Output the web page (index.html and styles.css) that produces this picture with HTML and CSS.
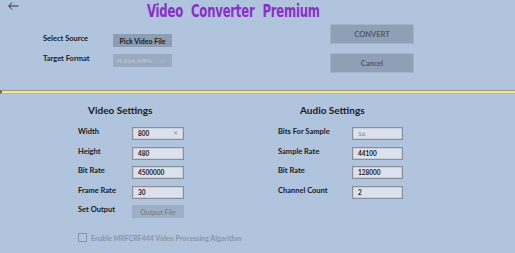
FILE: index.html
```html
<!DOCTYPE html>
<html>
<head>
    <title>Video Converter Premium</title>
    <link rel="stylesheet" href="styles.css">
</head>
<body>
    <div class="page">
        <div class="top">
            <div class="left">
                <div class="titlebar">
                    <span class="back">
                        <svg width="11" height="8" viewBox="0 0 11 8"><path d="M4 0.5 L0.8 4 L4 7.5 M0.8 4 H10.5" fill="none" stroke="#333" stroke-width="1"/></svg>
                    </span>
                    <h1>Video Converter Premium</h1>
                </div>
                <div class="source-form">
                    <label>Select Source</label>
                    <button class="btn pick">Pick Video File</button>
                    <label>Target Format</label>
                    <div class="combo">
                        <span>H.264/MP4</span>
                        <svg width="7" height="4" viewBox="0 0 7 4"><path d="M0.5 0.5 L3.5 3.5 L6.5 0.5" fill="none" stroke="#b3bfcf" stroke-width="0.8"/></svg>
                    </div>
                </div>
            </div>
            <div class="actions">
                <button class="btn big">CONVERT</button>
                <button class="btn big">Cancel</button>
            </div>
        </div>

        <div class="separator"></div>

        <div class="settings">
            <div class="group video">
                <h2>Video Settings</h2>
                <div class="rows">
                    <label>Width</label>
                    <div class="field">800<span class="clear">&#x2715;</span></div>
                    <label>Height</label>
                    <div class="field">480</div>
                    <label>Bit Rate</label>
                    <div class="field">4500000</div>
                    <label>Frame Rate</label>
                    <div class="field">30</div>
                    <label>Set Output</label>
                    <button class="btn output">Output File</button>
                </div>
                <div class="check">
                    <span class="box"></span>
                    <span>Enable MRFCRF444 Video Processing Algorithm</span>
                </div>
            </div>
            <div class="group audio">
                <h2>Audio Settings</h2>
                <div class="rows">
                    <label>Bits For Sample</label>
                    <div class="field dim">16</div>
                    <label>Sample Rate</label>
                    <div class="field">44100</div>
                    <label>Bit Rate</label>
                    <div class="field">128000</div>
                    <label>Channel Count</label>
                    <div class="field">2</div>
                </div>
            </div>
        </div>
    </div>
</body>
</html>
```

FILE: styles.css
```css
html, body {
    margin: 0;
    padding: 0;
}
body {
    background-color: #b0c4de;
    font-family: Lato, "Noto Sans", sans-serif;
    color: #1a1a1a;
}
.page {
    width: 515px;
    height: 253px;
    overflow: hidden;
}
.top {
    display: flex;
    height: 90px;
}
.left {
    width: 330px;
}
.titlebar {
    display: flex;
    align-items: flex-start;
    height: 34px;
}
.back {
    margin: 2px 0 0 8px;
    line-height: 0;
}
h1 {
    margin: 0 0 0 128px;
    font-family: "DejaVu Sans Condensed", "DejaVu Sans", sans-serif;
    font-weight: 900;
    font-size: 18.5px;
    line-height: 21px;
    color: #8a2fc8;
    letter-spacing: -0.3px;
    word-spacing: 6px;
    white-space: nowrap;
    transform: scaleX(0.7);
    transform-origin: left top;
}
.source-form {
    display: grid;
    grid-template-columns: 70px 59px;
    grid-auto-rows: 13px;
    row-gap: 7px;
    margin-left: 43px;
    align-items: center;
}
label {
    font-size: 7.5px;
    font-weight: 700;
    line-height: 10px;
    white-space: nowrap;
}
.source-form label {
    align-self: start;
}
.btn {
    border: none;
    padding: 0;
    margin: 0;
    font-family: Lato, "Noto Sans", sans-serif;
    font-weight: 700;
    font-size: 7px;
    cursor: pointer;
}
.pick {
    height: 13px;
    background-color: #8d9db3;
    color: #1c1c1c;
}
.combo {
    height: 13px;
    background-color: #9aaac0;
    display: flex;
    align-items: center;
    justify-content: space-between;
    padding: 0 6px 0 4px;
    box-sizing: border-box;
    font-size: 6.5px;
    color: #c3ccda;
}
.actions {
    display: flex;
    flex-direction: column;
    gap: 9px;
    padding-top: 24px;
}
.big {
    width: 84px;
    height: 20px;
    background-color: #8f9fb5;
    color: #4e5a6a;
    font-weight: 700;
    font-size: 7.5px;
    border: 1px solid #a3b3c8;
}
.separator {
    height: 2px;
    background-color: #eee6a4;
    border-top: 1px solid #9a9870;
    border-bottom: 1px solid #bdb98c;
    border-left: 2px solid #6f6d55;
}
.settings {
    display: grid;
    grid-template-columns: 200px 237px;
    padding-left: 78px;
    padding-top: 9px;
}
h2 {
    margin: 0 0 10px;
    font-size: 10px;
    font-weight: 700;
    line-height: 14px;
}
.video h2 {
    padding-left: 10px;
}
.audio h2 {
    padding-left: 22px;
}
.rows {
    display: grid;
    grid-auto-rows: 13px;
    row-gap: 6.5px;
    align-items: center;
}
.video .rows {
    grid-template-columns: 54px 52px;
}
.audio .rows {
    grid-template-columns: 74px 51px;
}
.rows label {
    align-self: start;
}
.field {
    height: 13px;
    box-sizing: border-box;
    background-color: #dbe2ed;
    border: 1px solid #8b8f97;
    box-shadow: inset 0 0 0 0.5px #b8bcc4;
    font-size: 6.5px;
    font-weight: 700;
    line-height: 11px;
    padding: 0 5px;
    display: flex;
    justify-content: space-between;
}
.field.dim {
    font-weight: 400;
    color: #7a7f88;
}
.clear {
    font-weight: 400;
    color: #8a8f98;
    font-size: 5.5px;
}
.output {
    height: 13px;
    background-color: #9fb0c6;
    color: #75859a;
}
.check {
    display: flex;
    align-items: center;
    gap: 4px;
    margin-top: 15px;
    white-space: nowrap;
    font-size: 7px;
    font-weight: 700;
    color: #8795a8;
}
.box {
    width: 7px;
    height: 7px;
    border: 1px solid #8795a8;
}
```
